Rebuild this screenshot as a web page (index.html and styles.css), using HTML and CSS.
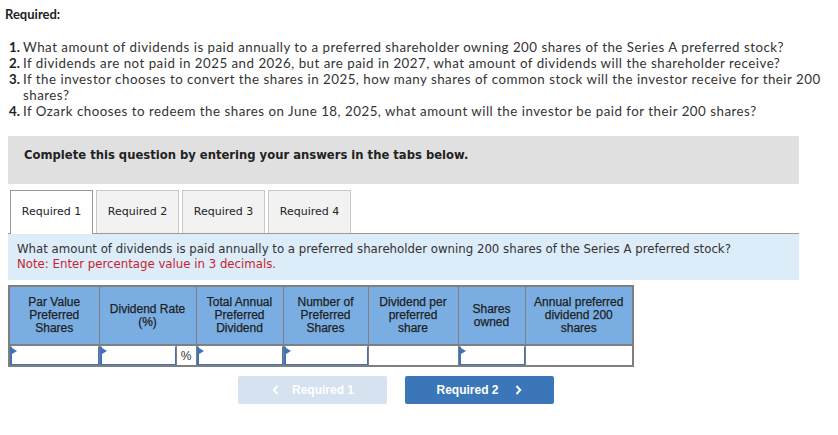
FILE: index.html
```html
<!DOCTYPE html>
<html>
<head>
    <title>Required</title>
    <link rel="stylesheet" href="styles.css">
</head>
<body>
    <div class="page">
        <h3 class="req-title">Required:</h3>
        <ol class="questions">
            <li><b>1.</b><span>What amount of dividends is paid annually to a preferred shareholder owning 200 shares of the Series A preferred stock?</span></li>
            <li><b>2.</b><span>If dividends are not paid in 2025 and 2026, but are paid in 2027, what amount of dividends will the shareholder receive?</span></li>
            <li><b>3.</b><span>If the investor chooses to convert the shares in 2025, how many shares of common stock will the investor receive for their 200 shares?</span></li>
            <li><b>4.</b><span>If Ozark chooses to redeem the shares on June 18, 2025, what amount will the investor be paid for their 200 shares?</span></li>
        </ol>

        <div class="instructions">Complete this question by entering your answers in the tabs below.</div>

        <div class="tabs">
            <div class="tab active">Required 1</div>
            <div class="tab">Required 2</div>
            <div class="tab">Required 3</div>
            <div class="tab">Required 4</div>
        </div>

        <div class="tab-panel">
            <p>What amount of dividends is paid annually to a preferred shareholder owning 200 shares of the Series A preferred stock?</p>
            <p class="note">Note: Enter percentage value in 3 decimals.</p>
        </div>

        <table class="answer-table">
            <colgroup>
                <col class="c1"><col class="c2"><col class="c2b"><col class="c3"><col class="c4"><col class="c5"><col class="c6"><col class="c7">
            </colgroup>
            <tr>
                <th>Par Value<br>Preferred<br>Shares</th>
                <th colspan="2">Dividend Rate<br>(%)</th>
                <th>Total Annual<br>Preferred<br>Dividend</th>
                <th>Number of<br>Preferred<br>Shares</th>
                <th>Dividend per<br>preferred<br>share</th>
                <th>Shares<br>owned</th>
                <th>Annual preferred<br>dividend 200<br>shares</th>
            </tr>
            <tr class="inputs">
                <td><div class="field"></div></td>
                <td><div class="field"></div></td>
                <td class="unit">%</td>
                <td><div class="field"></div></td>
                <td><div class="field"></div></td>
                <td></td>
                <td><div class="field"></div></td>
                <td></td>
            </tr>
        </table>

        <div class="nav">
            <button class="nav-btn prev" type="button">
                <svg class="chev" width="7" height="10" viewBox="0 0 7 10"><path d="M5.5 1 L1.8 5 L5.5 9" fill="none" stroke="#fff" stroke-width="2"/></svg>
                Required 1
            </button>
            <button class="nav-btn next" type="button">
                Required 2
                <svg class="chev" width="7" height="10" viewBox="0 0 7 10"><path d="M1.5 1 L5.2 5 L1.5 9" fill="none" stroke="#fff" stroke-width="2"/></svg>
            </button>
        </div>
    </div>
</body>
</html>
```

FILE: styles.css
```css
body {
    background-color: #ffffff;
    margin: 0;
    padding: 0;
    font-family: Lato, "Open Sans", Arial, sans-serif;
    color: #333;
}

.page {
    width: 791px;
    padding: 6px 0 0 8px;
}

.req-title {
    margin: 0 0 0 -3px;
    font-size: 13px;
    line-height: 16px;
    font-weight: bold;
    color: #222;
}

.questions {
    list-style: none;
    margin: 17px 0 0 1px;
    padding: 0;
    font-size: 13.3px;
    letter-spacing: 0.5px;
    line-height: 16px;
    width: 820px;
}

.questions li {
    display: flex;
    gap: 4px;
}

.questions b {
    flex: none;
    width: 10px;
    letter-spacing: 0;
    color: #222;
}

.instructions {
    margin-top: 17px;
    height: 48px;
    box-sizing: border-box;
    padding: 12px 16px 0;
    background-color: #e0e0e0;
    font-family: "DejaVu Sans", Verdana, sans-serif;
    font-size: 11.6px;
    font-weight: bold;
    color: #222;
}

.tabs {
    display: flex;
    gap: 3px;
    margin-top: 6px;
    padding-left: 2px;
}

.tab {
    width: 81px;
    height: 42px;
    line-height: 42px;
    text-align: center;
    background-color: #f2f2f2;
    border: 1px solid #c8c8c8;
    border-bottom: none;
    font-family: "DejaVu Sans", Verdana, sans-serif;
    font-size: 11px;
    color: #222;
}

.tab.active {
    background-color: #fff;
    border-color: #999;
    height: 43px;
    margin-bottom: -1px;
    position: relative;
}

.tab-panel {
    border-top: 1px solid #999;
    background-color: #dcecf9;
    padding: 8px 9px 8px;
    font-family: "DejaVu Sans", Verdana, sans-serif;
    font-size: 11.75px;
    line-height: 15px;
    color: #333;
}

.tab-panel p {
    margin: 0;
}

.tab-panel .note {
    color: #c8242f;
}

.answer-table {
    margin-top: 5px;
    border-collapse: collapse;
    table-layout: fixed;
    width: 624px;
    border: 2px solid #7f7f7f;
    font-family: "Liberation Sans", Arial, sans-serif;
    font-size: 12px;
}

.c1 { width: 90px; }
.c2 { width: 77px; }
.c2b { width: 20px; }
.c3 { width: 87px; }
.c4 { width: 85px; }
.c5 { width: 90px; }
.c6 { width: 67px; }
.c7 { width: 108px; }

.answer-table th {
    height: 57px;
    padding: 0 2px;
    background-color: #7aaee3;
    border: 1px solid #7f7f7f;
    border-bottom-width: 2px;
    font-weight: normal;
    line-height: 13px;
    color: #1e1e1e;
    -webkit-text-stroke: 0.25px #1e1e1e;
}

.answer-table td {
    height: 19px;
    padding: 0;
    border: 1px solid #7f7f7f;
    background-color: #fff;
}

.answer-table td.unit {
    text-align: center;
    font-size: 12px;
    color: #333;
}

.field {
    position: relative;
    height: 17px;
    border: 1px solid #3f73b6;
    border-top-color: #fff;
    border-width: 1px 1px 1px 2px;
}

.field::before {
    content: "";
    position: absolute;
    left: 0;
    top: 1px;
    border-left: 5px solid #3f73b6;
    border-top: 3px solid transparent;
    border-bottom: 3px solid transparent;
}

.nav {
    display: flex;
    justify-content: center;
    gap: 18px;
    margin-top: 9px;
    padding-right: 16px;
}

.nav-btn {
    display: flex;
    align-items: center;
    justify-content: center;
    gap: 13px;
    width: 149px;
    height: 28px;
    border: none;
    border-radius: 2px;
    font-family: "Liberation Sans", Arial, sans-serif;
    font-size: 12px;
    font-weight: bold;
    color: #fff;
}

.nav-btn.prev {
    background-color: #d6e2f0;
    padding-right: 4px;
}

.nav-btn.next {
    background-color: #3a76b8;
    gap: 16px;
    padding-left: 6px;
}
```
